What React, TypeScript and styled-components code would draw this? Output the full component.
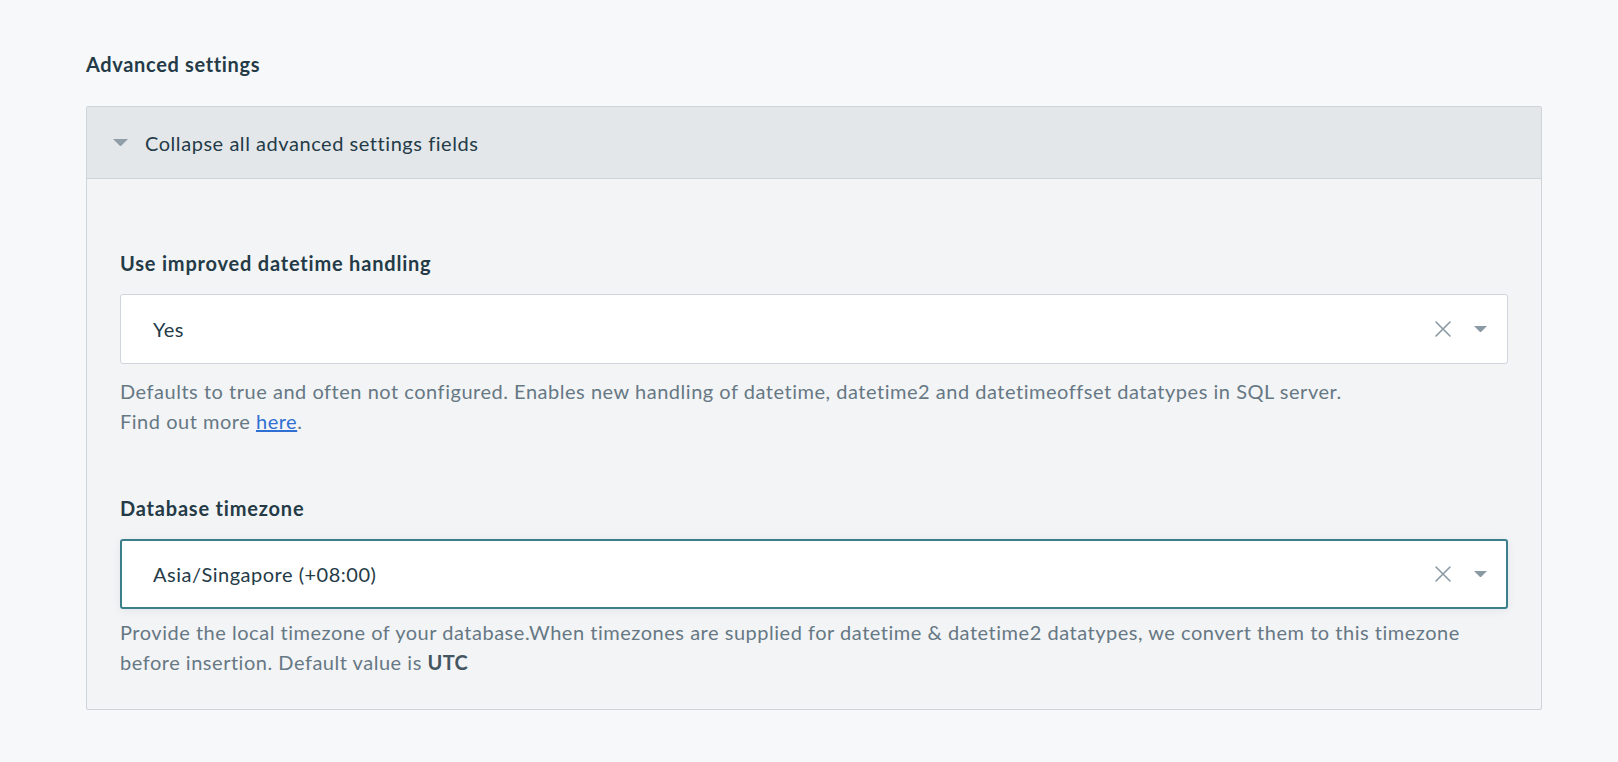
import React from "react";
import styled, { createGlobalStyle } from "styled-components";

const GlobalStyle = createGlobalStyle`
  html, body {
    margin: 0;
    padding: 0;
    background: #f7f8fa;
  }
  body {
    font-family: Lato, "Liberation Sans", sans-serif;
    color: #243b47;
    -webkit-font-smoothing: antialiased;
  }
`;

const Page = styled.div`
  padding: 50px 76px 40px 86px;
`;

const SectionTitle = styled.h2`
  margin: 0 0 28px 0;
  font-size: 20px;
  line-height: 28px;
  font-weight: 700;
  letter-spacing: 0.65px;
  color: #243b47;
`;

const Panel = styled.section`
  border: 1px solid #cdd4da;
  border-radius: 2px;
  background: #f3f4f6;
`;

const PanelHeader = styled.button`
  display: flex;
  align-items: center;
  gap: 17px;
  width: 100%;
  height: 72px;
  padding: 0 0 0 26px;
  margin: 0;
  border: none;
  border-bottom: 1px solid #cdd4da;
  background: #e3e7ea;
  font-family: inherit;
  font-size: 20px;
  letter-spacing: 0.55px;
  color: #243b47;
  text-align: left;
  cursor: pointer;
`;

const PanelBody = styled.div`
  padding: 70px 33px 32px 33px;
  display: flex;
  flex-direction: column;
  gap: 58px;
`;

const Field = styled.div`
  display: flex;
  flex-direction: column;
`;

const Label = styled.label`
  font-size: 20px;
  line-height: 28px;
  font-weight: 700;
  letter-spacing: 0.8px;
  color: #243b47;
  margin-bottom: 17px;
`;

const SelectBox = styled.div<{ $focused?: boolean }>`
  display: flex;
  align-items: center;
  height: 70px;
  box-sizing: border-box;
  background: #ffffff;
  border: ${(p) => (p.$focused ? "2px solid #3b7f8b" : "1px solid #cfd5db")};
  border-radius: 3px;
  padding: 0 ${(p) => (p.$focused ? "19px" : "20px")} 0 ${(p) => (p.$focused ? "31px" : "32px")};
  box-shadow: ${(p) => (p.$focused ? "0 2px 8px rgba(30, 60, 80, 0.08)" : "none")};
`;

const Value = styled.span`
  flex: 1;
  font-size: 20px;
  letter-spacing: 0.5px;
  color: #243b47;
`;

const IconButton = styled.span`
  display: inline-flex;
  align-items: center;
  justify-content: center;
  color: #8a9aa4;
`;

const Controls = styled.div`
  display: flex;
  align-items: center;
  gap: 22px;
`;

const Help = styled.p<{ $gap?: number }>`
  margin: ${(p) => p.$gap ?? 12}px 0 0 0;
  font-size: 20px;
  line-height: 30px;
  letter-spacing: 0.52px;
  color: #667884;
`;

const Link = styled.a`
  color: #2f6fd3;
  text-decoration: underline;
`;

const Strong = styled.strong`
  font-weight: 700;
  letter-spacing: 0.3px;
  color: #44565f;
`;

const Caret = ({ color = "#8a9aa4", w = 14 }: { color?: string; w?: number }) => (
  <svg width={w} height={w / 2} viewBox="0 0 14 7">
    <path d="M0 0 L14 0 L7 7 Z" fill={color} />
  </svg>
);

const Cross = () => (
  <svg width="18" height="18" viewBox="0 0 18 18">
    <path d="M2 2 L16 16 M16 2 L2 16" stroke="#8a9aa4" strokeWidth="1.6" strokeLinecap="round" />
  </svg>
);

const Select = ({ value, focused }: { value: string; focused?: boolean }) => (
  <SelectBox $focused={focused}>
    <Value>{value}</Value>
    <Controls>
      <IconButton>
        <Cross />
      </IconButton>
      <IconButton>
        <Caret w={13} />
      </IconButton>
    </Controls>
  </SelectBox>
);

export default function App() {
  return (
    <Page>
      <GlobalStyle />
      <SectionTitle>Advanced settings</SectionTitle>
      <Panel>
        <PanelHeader>
          <Caret color="#8f9ea7" w={15} />
          <span>Collapse all advanced settings fields</span>
        </PanelHeader>
        <PanelBody>
          <Field>
            <Label>Use improved datetime handling</Label>
            <Select value="Yes" />
            <Help>
              Defaults to true and often not configured. Enables new handling of datetime, datetime2 and
              datetimeoffset datatypes in SQL server.
              <br />
              Find out more <Link href="#">here</Link>.
            </Help>
          </Field>
          <Field>
            <Label>Database timezone</Label>
            <Select value="Asia/Singapore (+08:00)" focused />
            <Help $gap={8}>
              Provide the local timezone of your database.When timezones are supplied for datetime &amp; datetime2
              datatypes, we convert them to this timezone before insertion. Default value is <Strong>UTC</Strong>
            </Help>
          </Field>
        </PanelBody>
      </Panel>
    </Page>
  );
}
